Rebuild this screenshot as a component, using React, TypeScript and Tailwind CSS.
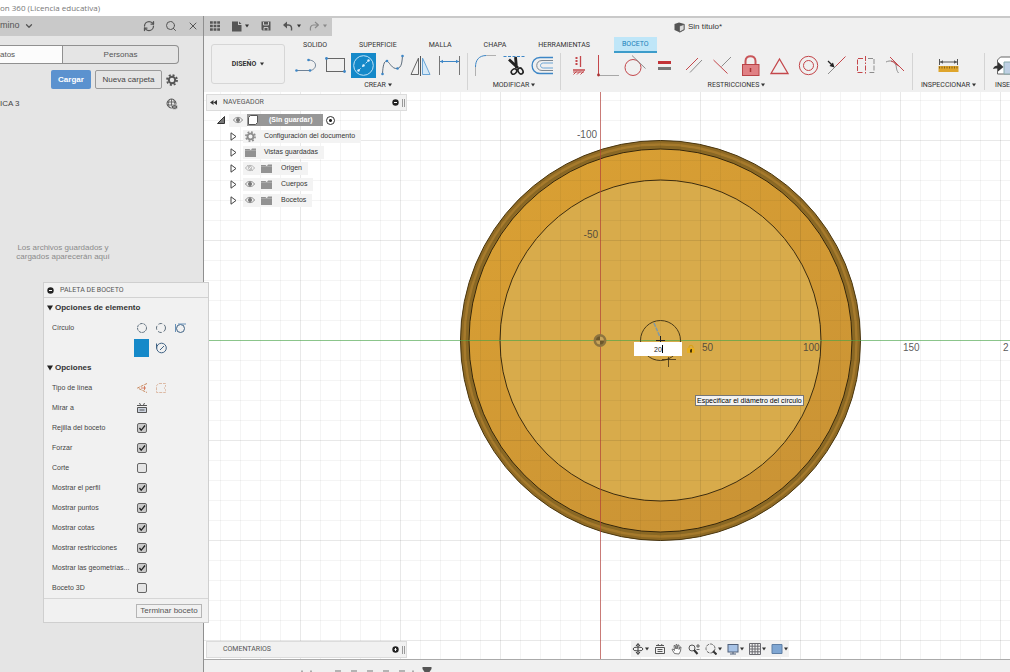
import React, { useState } from 'react';
import { ChevronDown, RefreshCw, Search, X } from 'lucide-react';

interface IconProps {
    children: React.ReactNode;
    className?: string;
    box?: string;
}

const Icon: React.FC<IconProps> = ({ children, className = 'w-[25px] h-[25px]', box = '0 0 25 25' }) => (
    <svg viewBox={box} className={`shrink-0 ${className}`} fill="none" stroke="#4a4a4a" strokeWidth="1" aria-hidden="true">
        {children}
    </svg>
);

const Caret: React.FC<{ className?: string }> = ({ className = 'text-[#333]' }) => (
    <svg viewBox="0 0 4 4" className={`w-1 h-1 shrink-0 ${className}`} fill="currentColor" aria-hidden="true">
        <path d="M0 0.5h4L2 3.5z" />
    </svg>
);

const Gear: React.FC<{ className?: string }> = ({ className = '' }) => (
    <svg viewBox="0 0 12 12" className={`shrink-0 ${className}`} fill="none" stroke="currentColor" aria-hidden="true">
        <circle cx="6" cy="6" r="3.2" strokeWidth="2" />
        <circle cx="6" cy="6" r="5" strokeWidth="1.800" strokeDasharray="2 1.927" />
    </svg>
);

const BLUE = '#3d86c6';
const RED = '#c4474b';
const GRAY = '#8d8d8d';

interface Tool {
    name: string;
    active?: boolean;
    art: React.ReactNode;
}

const createTools: Tool[] = [
    {
        name: 'Línea',
        art: (
            <>
                <path d="M2.500 17.500H16c7.500-1 7.500-10-1-10.500" stroke="#6f8296" />
                <g fill={BLUE} stroke="none"><circle cx="2.500" cy="17.500" r="1.300" /><circle cx="16" cy="17.500" r="1.300" /><circle cx="14.500" cy="7" r="1.300" /></g>
            </>
        ),
    },
    {
        name: 'Rectángulo',
        art: (
            <>
                <rect x="3.500" y="5.500" width="18" height="13" stroke="#666" />
                <g fill={BLUE} stroke="none"><circle cx="3.500" cy="5.500" r="1.400" /><circle cx="21.500" cy="18.500" r="1.400" /></g>
            </>
        ),
    },
    {
        name: 'Círculo',
        active: true,
        art: (
            <>
                <circle cx="12.500" cy="12.500" r="9.800" stroke="#bfe2f7" />
                <path d="M7.500 17.500l10-10" stroke="#bfe2f7" strokeDasharray="3 2" />
                <g fill="#e3f4ff" stroke="none"><circle cx="12.500" cy="12.500" r="1.200" /><circle cx="7.500" cy="17.500" r="1.200" /><circle cx="17.500" cy="7.500" r="1.200" /></g>
            </>
        ),
    },
    {
        name: 'Spline',
        art: (
            <>
                <path d="M2.500 21C3 10 5 7 7.500 8.500S12 16 17 15.500 22 8 22.500 3" stroke="#5d6d7d" />
                <g fill={BLUE} stroke="none"><circle cx="2.500" cy="21" r="1.300" /><circle cx="7" cy="8" r="1.300" /><circle cx="17.500" cy="15.500" r="1.300" /><circle cx="22.500" cy="3" r="1.300" /></g>
            </>
        ),
    },
    {
        name: 'Simetría',
        art: (
            <>
                <path d="M10.500 5v16.500H3z" stroke="#666" />
                <path d="M14.500 5v16.500H22z" stroke="#6aa5d6" fill="#d5e9f8" />
                <path d="M12.500 3v20" stroke="#555" />
            </>
        ),
    },
    {
        name: 'Cota',
        art: (
            <>
                <path d="M2.500 3v19M22.500 3v19" stroke="#777" />
                <path d="M3 8.500h19" stroke={BLUE} />
                <path d="M3 8.500l3-1.800v3.600zM22 8.500l-3-1.800v3.600z" fill={BLUE} stroke="none" />
            </>
        ),
    },
];

const modifyTools: Tool[] = [
    {
        name: 'Empalme',
        art: (
            <>
                <path d="M2.500 23V13" stroke="#b0b0b0" />
                <path d="M2.500 14C2.500 7 6 2.500 13.500 2.500" stroke={BLUE} />
                <path d="M13.500 2.500H23" stroke="#b0b0b0" />
            </>
        ),
    },
    {
        name: 'Recortar',
        art: (
            <>
                <path d="M1.500 3.500H24" stroke={BLUE} strokeDasharray="3 1.500" />
                <path d="M7 6.500l9 8.500M13.500 4l1 11" stroke="#222" strokeWidth="2.800" />
                <ellipse cx="12" cy="18.500" rx="3" ry="2.300" stroke="#222" strokeWidth="1.600" transform="rotate(-40 12 18.500)" />
                <ellipse cx="18.500" cy="18" rx="2.300" ry="3.200" stroke="#222" strokeWidth="1.600" transform="rotate(-30 18.500 18)" />
            </>
        ),
    },
    {
        name: 'Desfase',
        art: (
            <>
                <path d="M23 4.500H10c-10.500 0-10.500 16 0 16h13" stroke={BLUE} strokeWidth="1.300" />
                <path d="M23 7.500H12c-7 0-7 10 0 10h11" stroke="#7d8790" />
                <path d="M23 10h-9.500c-4 0-4 5 0 5H23" stroke="#6aa5d6" />
            </>
        ),
    },
];

const constraintTools: Tool[] = [
    {
        name: 'Horizontal/Vertical',
        art: (
            <>
                <path d="M14.500 3v11M7 17h12" stroke={RED} strokeWidth="1.300" />
                <path d="M10.500 4v9" stroke={RED} strokeWidth="2" strokeDasharray="2 1" />
                <path d="M7.500 21.500l3-3M11 21.500l3-3M14.500 21.500l3-3M7 19h11" stroke={RED} />
            </>
        ),
    },
    {
        name: 'Coincidente',
        art: (
            <>
                <path d="M3.500 2v20" stroke={RED} />
                <path d="M4 22.500h20" stroke="#a8a8a8" />
                <circle cx="3.500" cy="22" r="1.400" fill="#a33" stroke="none" />
            </>
        ),
    },
    {
        name: 'Tangente',
        art: (
            <>
                <circle cx="10" cy="14.500" r="8" stroke={RED} />
                <path d="M9 2.500l13.500 13" stroke={GRAY} />
            </>
        ),
    },
    {
        name: 'Igual',
        art: (
            <>
                <path d="M6 9.500h13" stroke="#c23237" strokeWidth="3" />
                <path d="M6 15.500h13" stroke="#777" strokeWidth="3" />
            </>
        ),
    },
    {
        name: 'Paralelo',
        art: (
            <>
                <path d="M5 17L17 5" stroke={RED} />
                <path d="M9 19.500l12-12.500" stroke={GRAY} />
            </>
        ),
    },
    {
        name: 'Perpendicular',
        art: (
            <>
                <path d="M3.500 7l14 13.500" stroke={RED} />
                <path d="M11.500 13.500L21 4" stroke={GRAY} />
            </>
        ),
    },
    {
        name: 'Fijar',
        art: (
            <>
                <path d="M7.500 12V8c0-6.500 10-6.500 10 0v4" stroke="#c9565a" strokeWidth="2" />
                <rect x="4.500" y="11.500" width="16.500" height="11" fill="#e08084" stroke="#b84448" />
                <path d="M12.500 15v4" stroke="#a33" strokeWidth="1.500" />
            </>
        ),
    },
    { name: 'Punto medio', art: <path d="M12.500 6l8.500 14.500H4z" stroke={RED} strokeWidth="1.300" /> },
    {
        name: 'Concéntrico',
        art: (
            <>
                <circle cx="12.500" cy="12.500" r="9.200" stroke={RED} />
                <circle cx="12.500" cy="12.500" r="5" stroke={RED} />
            </>
        ),
    },
    {
        name: 'Colineal',
        art: (
            <>
                <path d="M4 21l8-8" stroke={GRAY} />
                <path d="M12 13l9.500-9.500" stroke={RED} />
                <path d="M4 8l4 4" stroke="#222" strokeWidth="1.300" />
                <path d="M10.500 14.500l-5-1.500L9 9.500z" fill="#222" stroke="none" />
            </>
        ),
    },
    {
        name: 'Simetría',
        art: (
            <>
                <path d="M10 5.500H4.500v14H10" stroke={RED} strokeDasharray="5 1.500" />
                <path d="M15 5.500h6v14h-6" stroke={GRAY} strokeDasharray="5 1.500" />
                <path d="M12.500 3v19" stroke={RED} strokeDasharray="5 1.500 1.500 1.500" />
            </>
        ),
    },
    {
        name: 'Curvatura',
        art: (
            <>
                <path d="M8 4l14 14" stroke={RED} />
                <path d="M4 9c4-2 8-1 9.500 2s0 5 3 9" stroke={GRAY} />
                <path d="M9 8c4 1 5 4 8 5" stroke={RED} />
            </>
        ),
    },
];

const inspectTools: Tool[] = [
    {
        name: 'Medir',
        art: (
            <>
                <path d="M3.500 6v6M21.500 6v6M4 9h17" stroke="#555" />
                <path d="M4 9l3-1.700v3.400zM21 9l-3-1.700v3.400z" fill="#555" stroke="none" />
                <rect x="2.500" y="13" width="20" height="6" fill="#dfa52c" stroke="none" />
                <path d="M3 14.500h19" stroke="#8a6416" strokeWidth="2" strokeDasharray="1 1.500" />
            </>
        ),
    },
];

const ToolGroup: React.FC<{ label: string; tools: Tool[]; rowClassName: string; groupClassName?: string }> = ({ label, tools, rowClassName, groupClassName = '' }) => (
    <div className={`flex flex-col items-center shrink-0 px-[5px] border-r border-[#d4d4d4] ${groupClassName}`}>
        <div className={`flex ${rowClassName}`}>
            {tools.map((tool) => (
                <button key={tool.name} type="button" aria-label={tool.name} className={tool.active ? 'bg-[#1589c9]' : ''}>
                    <Icon>{tool.art}</Icon>
                </button>
            ))}
        </div>
        <button type="button" className="flex items-center gap-0.5 mt-0.5 text-[7px] leading-[10px] text-[#333]">
            {label}
            <Caret />
        </button>
    </div>
);

const tabs = ['SOLIDO', 'SUPERFICIE', 'MALLA', 'CHAPA', 'HERRAMIENTAS', 'BOCETO'];

const QuickAccess: React.FC = () => (
    <div className="flex h-5 shrink-0 bg-[#c9c9c9]">
        <div className="flex items-center w-32 shrink-0 pl-1.5 text-[#555]">
            <button type="button" aria-label="Panel de datos">
                <Icon className="w-[10px] h-[10px]" box="0 0 10 10">
                    <path d="M0 1.500h10M0 5h10M0 8.500h10" stroke="#555" strokeWidth="2.500" strokeDasharray="2.800 0.800" />
                </Icon>
            </button>
            <button type="button" aria-label="Archivo" className="flex items-center gap-[3px] ml-3">
                <Icon className="w-[10px] h-[11px]" box="0 0 10 11">
                    <path d="M0 0.500h6v3.500h3.500v6.500H0z" fill="#555" stroke="none" />
                    <path d="M7 0.500l2.500 2.500H7z" fill="#555" stroke="none" />
                </Icon>
                <Caret />
            </button>
            <button type="button" aria-label="Guardar" className="ml-3">
                <Icon className="w-[10px] h-[10px]" box="0 0 10 10">
                    <path d="M0.500 0.500h9v9h-8l-1-1z" fill="#555" stroke="none" />
                    <path d="M2.500 1v3h5V1M3 9.500V6.500h4v3" stroke="#c9c9c9" />
                </Icon>
            </button>
            <button type="button" aria-label="Deshacer" className="flex items-center gap-1 ml-3">
                <Icon className="w-[10px] h-[10px]" box="0 0 10 10">
                    <path d="M2 4h3.500c2.500 0 3.500 2 3 5.500" stroke="#555" strokeWidth="1.400" />
                    <path d="M4 0.500v7L0 4z" fill="#555" stroke="none" />
                </Icon>
                <Caret />
            </button>
            <button type="button" aria-label="Rehacer" className="flex items-center gap-1 ml-2">
                <Icon className="w-[10px] h-[10px]" box="0 0 10 10">
                    <path d="M9 4H4.500C2 4 1 6 1.500 9.500M6 1l3.500 3L6 7" stroke="#8a8a8a" strokeWidth="1.200" />
                </Icon>
                <Caret className="text-[#8a8a8a]" />
            </button>
        </div>
        <div className="flex flex-1 items-center justify-center gap-[3px] pl-[54px] mt-0.5 bg-[#f0f0f0]">
            <Icon className="w-[11px] h-[11px]" box="0 0 11 11">
                <path d="M0.500 2L5 0.500l5.500 1.500v6L6 10.500.5 8z" fill="#555" stroke="none" />
                <path d="M5.500 4l4.500-1.500v5L5.500 10z" fill="#ddd" stroke="#555" strokeWidth="0.700" />
            </Icon>
            <span className="text-[8px] leading-[10px] text-[#333]">Sin título*</span>
        </div>
    </div>
);

const Ribbon: React.FC = () => (
    <div className="flex h-14 shrink-0 overflow-hidden bg-[#f0f0f0] font-['Roboto',sans-serif]">
        <button type="button" className="flex items-center justify-center gap-1 w-[74px] h-10 mt-2 ml-[7px] shrink-0 rounded-[3px] border border-[#d6d6d6] text-[7px] font-bold text-[#333]">
            DISEÑO
            <Caret />
        </button>
        <div className="flex flex-col ml-1 pt-px">
            <div className="flex gap-4 pl-1.5">
                {tabs.map((tab) => (
                    <button
                        key={tab}
                        type="button"
                        className={
                            tab === 'BOCETO'
                                ? 'h-4 px-2 text-[7px] leading-[14px] text-[#1b7fb8] bg-[#bfe6f8] border-b-2 border-[#3d9cca]'
                                : 'h-4 px-2 text-[7px] leading-[14px] text-[#333]'
                        }
                    >
                        {tab}
                    </button>
                ))}
            </div>
            <div className="flex h-[37px]">
                <ToolGroup label="CREAR" tools={createTools} rowClassName="w-[168px] justify-between" />
                <ToolGroup label="MODIFICAR" tools={modifyTools} rowClassName="w-[82px] justify-between" />
                <ToolGroup label="RESTRICCIONES" tools={constraintTools} rowClassName="w-[341px] justify-between" />
                <ToolGroup label="INSPECCIONAR" tools={inspectTools} rowClassName="justify-center" groupClassName="w-[72px]" />
                <div className="flex flex-col shrink-0 pl-2">
                    <button type="button" aria-label="Insertar">
                        <Icon className="w-10 h-[25px]" box="0 0 40 25">
                            <path d="M4.500 7l3-3H24v17H4.500z" fill="#fff" stroke="#666" />
                            <path d="M11 9h13v12H11z" fill="#bfd0e4" stroke="#8aa" />
                            <path d="M0 16c1-3 2.500-3.500 5-3.500V9l5.500 5-5.500 4.500V15.500C3 15.500 1.500 15.500 0 16z" fill="#333" stroke="none" />
                        </Icon>
                    </button>
                    <button type="button" className="mt-0.5 pl-0.5 text-left text-[7px] leading-[10px] text-[#333]">INSE</button>
                </div>
            </div>
        </div>
    </div>
);

const DataPanel: React.FC = () => (
    <aside className="flex flex-col w-[204px] shrink-0 bg-[#e5e5e5] border-r border-[#8f8f8f]">
        <div className="flex items-center h-5 shrink-0 pr-1 bg-[#c9c9c9] text-[#555]">
            <button type="button" className="flex items-center gap-1 text-[9px]">
                mino
                <ChevronDown className="w-2.5 h-2.5" strokeWidth={3} />
            </button>
            <div className="flex items-center gap-2.5 ml-auto">
                <button type="button" aria-label="Actualizar"><RefreshCw className="w-3 h-3" strokeWidth={2.5} /></button>
                <button type="button" aria-label="Buscar"><Search className="w-3 h-3" /></button>
                <button type="button" aria-label="Cerrar"><X className="w-3 h-3" /></button>
            </div>
        </div>
        <div className="flex mt-[9px] mr-6 h-[19px] shrink-0 border border-l-0 border-[#909090] rounded-r-sm text-[8px] text-[#555]">
            <button type="button" className="w-[62px] bg-[#fcfcfc] text-left">atos</button>
            <button type="button" className="flex-1 border-l border-[#909090]">Personas</button>
        </div>
        <div className="flex items-center gap-1 mt-1.5 pl-[51px]">
            <button type="button" className="w-10 h-[19px] rounded-xs bg-[#5b92cf] text-[8px] font-bold text-white">Cargar</button>
            <button type="button" className="w-[67px] h-[19px] rounded-xs border border-[#9a9a9a] text-[8px] text-[#444] whitespace-nowrap">Nueva carpeta</button>
            <button type="button" aria-label="Configuración"><Gear className="w-3 h-3 text-[#555]" /></button>
        </div>
        <div className="flex items-center justify-between mt-[9px] pr-[25px] text-[8px] text-[#444]">
            <span>ICA 3</span>
            <Icon className="w-3 h-3" box="0 0 12 12">
                <circle cx="5.500" cy="5.500" r="4.500" stroke="#555" />
                <path d="M1 4h9M1 7h9M5.500 1v9M3.500 1.500c-1.500 3-1.500 5 0 8M7.500 1.500c1.500 3 1.500 5 0 8" stroke="#555" strokeWidth="0.800" />
                <ellipse cx="8.500" cy="9" rx="3.200" ry="2.300" fill="#555" stroke="#e5e5e5" strokeWidth="0.700" />
                <path d="M7.200 9h2.600" stroke="#e5e5e5" strokeWidth="0.800" />
            </Icon>
        </div>
        <p className="w-[126px] mt-[133px] text-center text-[8px] leading-[9px] text-[#8b8b8b]">
            Los archivos guardados y cargados aparecerán aquí
        </p>
    </aside>
);

const Eye: React.FC<{ off?: boolean }> = ({ off = false }) => (
    <Icon className="w-[10px] h-2" box="0 0 10 8">
        <path d="M0.500 4C2.500 0.500 7.500 0.500 9.500 4 7.500 7.500 2.500 7.500 0.500 4z" stroke={off ? '#b5b5b5' : '#8d8d8d'} />
        <circle cx="5" cy="4" r="1.700" fill={off ? 'none' : '#777'} stroke={off ? '#b5b5b5' : '#777'} strokeWidth="0.800" />
        {off && <path d="M2 1l6 6" stroke="#b5b5b5" strokeWidth="0.800" />}
    </Icon>
);

const Folder: React.FC = () => (
    <Icon className="w-[11px] h-[9px]" box="0 0 11 9">
        <path d="M0 1h4.500l1 1h.5l1-1.500h4V9H0z" fill="#929292" stroke="none" />
        <path d="M0 2.500h11" stroke="#b8b8b8" strokeWidth="0.600" />
    </Icon>
);

const PanelBar: React.FC<{ title: string; mark: 'minus' | 'plus'; collapsible?: boolean }> = ({ title, mark, collapsible = false }) => (
    <div className="flex items-center w-[201px] h-[17px] pl-[3px] pr-px border border-[#dcdcdc] bg-[#f1f1f1] text-[7px] leading-[9px] text-[#555]">
        <span className="w-[13px]">
            {collapsible && (
                <Icon className="w-[7px] h-[5px]" box="0 0 7 5">
                    <path d="M3.500 0v5L0 2.500zM7 0v5L3.500 2.500z" fill="#333" stroke="none" />
                </Icon>
            )}
        </span>
        <span className="font-['Roboto',sans-serif]">{title}</span>
        <button type="button" aria-label={`Mostrar u ocultar ${title}`} className="ml-auto">
            <Icon className="w-[7px] h-[7px]" box="0 0 7 7">
                <circle cx="3.500" cy="3.500" r="3.200" fill="#222" stroke="none" />
                <path d={mark === 'minus' ? 'M2 3.500h3' : 'M3.500 2v3M2.500 3.500h2'} stroke="#fff" />
            </Icon>
        </button>
        <span className="w-[3px] h-2 ml-[3px] border-x border-[#999]" />
    </div>
);

interface TreeNode {
    label: string;
    kind: 'settings' | 'folder' | 'visible' | 'hidden';
}

const treeNodes: TreeNode[] = [
    { label: 'Configuración del documento', kind: 'settings' },
    { label: 'Vistas guardadas', kind: 'folder' },
    { label: 'Origen', kind: 'hidden' },
    { label: 'Cuerpos', kind: 'visible' },
    { label: 'Bocetos', kind: 'visible' },
];

const Browser: React.FC = () => (
    <div className="absolute left-0.5 top-0.5 text-[7px] text-[#333]">
        <PanelBar title="NAVEGADOR" mark="minus" collapsible />
        <div className="flex items-center h-4 mt-px pl-[11px]">
            <Icon className="w-2 h-2" box="0 0 8 8">
                <path d="M7.500 0.500v7h-7z" fill="#777" stroke="#333" />
            </Icon>
            <span className="flex items-center h-[13px] ml-1 pl-1 pr-1 bg-[#f3f3f3]"><Eye /></span>
            <span className="flex items-center gap-[10px] h-3 w-[76px] bg-[#979797] font-bold text-white">
                <Icon className="w-3 h-3" box="0 0 12 12">
                    <path d="M1.500 3.500l2-2h7v7l-2 2h-7z" fill="#fff" stroke="#555" />
                </Icon>
                (Sin guardar)
            </span>
            <input type="radio" name="componente" aria-label="Activar componente" defaultChecked className="appearance-none w-[9px] h-[9px] ml-[3px] rounded-full border border-[#333] bg-white bg-[radial-gradient(#222_1px,transparent_2px)]" />
        </div>
        {treeNodes.map((node) => (
            <div key={node.label} className="flex items-center h-4 pl-6">
                <button type="button" aria-label={`Expandir ${node.label}`}>
                    <Icon className="w-[7px] h-[9px]" box="0 0 7 9">
                        <path d="M1 0.800v7.400l5-3.700z" fill="#fff" stroke="#444" />
                    </Icon>
                </button>
                <span className="flex items-center h-[13px] ml-1.5 pl-0.5 pr-1.5 bg-[#f3f3f3]">
                    {node.kind === 'settings' && <Gear className="w-[11px] h-[11px] mr-2 text-[#8d8d8d]" />}
                    {node.kind === 'folder' && <span className="mr-2"><Folder /></span>}
                    {(node.kind === 'visible' || node.kind === 'hidden') && (
                        <span className="flex items-center gap-1.5 mr-[9px]">
                            <Eye off={node.kind === 'hidden'} />
                            <Folder />
                        </span>
                    )}
                    {node.label}
                </span>
            </div>
        ))}
    </div>
);

const gridLines = (from: number, to: number) => {
    const lines: number[] = [];
    for (let v = from; v <= to; v += 20) lines.push(v);
    return lines;
};

// Everything here is in window coordinates, the model origin sits at 600, 340.
const Drawing: React.FC = () => (
    <svg className="absolute inset-0 w-full h-full" fill="none" aria-hidden="true">
        <defs>
            <linearGradient id="rim" x1="0" y1="0" x2="0.6" y2="1">
                <stop offset="0" stopColor="#dba133" />
                <stop offset="1" stopColor="#cb9435" />
            </linearGradient>
            <g id="grid">
                {gridLines(220, 3000).map((x) => (
                    <path key={`x${x}`} d={`M${x + 0.5} 92V2000`} stroke="#000" strokeOpacity={x % 100 === 0 ? 0.09 : 0.045} />
                ))}
                {gridLines(100, 2000).map((y) => (
                    <path key={`y${y}`} d={`M204 ${y + 0.5}H3000`} stroke="#000" strokeOpacity={y % 100 === 40 ? 0.09 : 0.045} />
                ))}
            </g>
        </defs>
        <g transform="translate(-204 -92)">
            <circle cx="660.500" cy="340.500" r="200" fill="#94702a" />
            <circle cx="660.500" cy="340.500" r="198" stroke="#8f6a24" strokeWidth="3" />
            <circle cx="660.500" cy="340.500" r="196" stroke="#a67a2c" strokeWidth="2.500" />
            <circle cx="660.500" cy="340.500" r="193.500" stroke="#8a6824" strokeWidth="2.500" />
            <circle cx="660.500" cy="340.500" r="200" stroke="#4a360f" />
            <circle cx="660.500" cy="340.500" r="191.500" fill="url(#rim)" stroke="#33250a" />
            <circle cx="660.500" cy="340.500" r="160.500" fill="#d8ab4b" stroke="#3d2d10" />
            <use href="#grid" />
            <path d="M600.500 92V2000" stroke="#b8403a" strokeOpacity="0.65" />
            <path d="M204 340.500H3000" stroke="#4cae4c" strokeOpacity="0.6" />
            <circle cx="600" cy="340.500" r="6.500" fill="#8d7440" />
            <circle cx="600" cy="340.500" r="4" fill="#6d582c" />
            <path d="M600 340.500v-4a4 4 0 0 1 4 4zM600 340.500v4a4 4 0 0 1-4-4z" fill="#c9a55a" />
            <circle cx="660.500" cy="340.500" r="20" stroke="#4a3a18" />
            <path d="M654 323l6 14" stroke="#8199a5" strokeWidth="1.500" strokeDasharray="4 1" />
            <path d="M660.500 336v9M656 340.500h9" stroke="#222" />
            <path d="M668.500 357v10M662 359.500h14" stroke="#3d3014" strokeOpacity="0.8" />
            <g fontFamily="Liberation Sans, sans-serif" fontSize="10" fill="#3a3a3a" fillOpacity="0.85">
                <text x="597" y="138" textAnchor="end">-100</text>
                <text x="598" y="238" textAnchor="end">-50</text>
                <text x="702" y="351">50</text>
                <text x="803" y="351">100</text>
                <text x="903" y="351">150</text>
                <text x="1003" y="351">2</text>
            </g>
        </g>
    </svg>
);

const ViewTools: React.FC = () => {
    const items: { name: string; menu?: boolean; art: React.ReactNode }[] = [
        {
            name: 'Órbita',
            menu: true,
            art: (
                <>
                    <ellipse cx="6" cy="6" rx="5" ry="2" stroke="#444" />
                    <path d="M6 1v10M4 3l2-2.500L8 3M4 9l2 2.500L8 9" stroke="#333" />
                </>
            ),
        },
        {
            name: 'Mirar a',
            art: (
                <>
                    <path d="M1.500 4.500h9v6h-9zM3.500 6.500h5M3.500 8.500h5M2 2.500h8" stroke="#555" />
                    <path d="M4 1l1 2M8 1L7 3" stroke="#555" />
                </>
            ),
        },
        {
            name: 'Encuadre',
            art: <path d="M3.500 10.500L1 6.500l1-.5 1.500 1.500L3 2.500h1L5 6V1.500h1V6l1-4h1v4.500l1-2.500h1L9.500 8 8 11z" fill="#fff" stroke="#555" strokeWidth="0.800" />,
        },
        {
            name: 'Zoom',
            art: (
                <>
                    <circle cx="4" cy="5" r="3" stroke="#555" />
                    <path d="M6 7l3.500 4" stroke="#333" strokeWidth="2" />
                    <path d="M8 3h4M10 1v4M8.500 6.500h3" stroke="#444" strokeWidth="0.800" />
                </>
            ),
        },
        {
            name: 'Ajustar',
            menu: true,
            art: (
                <>
                    <circle cx="5.500" cy="5.500" r="4.500" stroke="#666" strokeDasharray="3 1" />
                    <path d="M8 8l3.500 3.500" stroke="#333" strokeWidth="2" />
                </>
            ),
        },
        {
            name: 'Configuración de visualización',
            menu: true,
            art: (
                <>
                    <rect x="1" y="1.500" width="10" height="7.500" fill="#a8c3e6" stroke="#51617a" />
                    <path d="M6 9v2M3 11h6" stroke="#51617a" />
                </>
            ),
        },
        {
            name: 'Rejilla',
            menu: true,
            art: <path d="M0.500 0.500h11v11H.5zM3.200 1v10M6 1v10M8.800 1v10M1 3.200h10M1 6h10M1 8.800h10" stroke="#6a6a70" />,
        },
        {
            name: 'Ventanas gráficas',
            menu: true,
            art: <path d="M1 1.500h10v9H1z" fill="#7fa6d2" stroke="#5f7fa5" />,
        },
    ];
    return (
        <div className="absolute left-[427px] bottom-0.5 flex items-center gap-[5px] h-4 px-px bg-[#f1f1f1]">
            {items.map((item) => (
                <button key={item.name} type="button" aria-label={item.name} className="flex items-center gap-px">
                    <Icon className="w-3 h-3" box="0 0 12 12">{item.art}</Icon>
                    {item.menu && <Caret />}
                </button>
            ))}
        </div>
    );
};

const Canvas: React.FC = () => {
    const [diameter, setDiameter] = useState('20');

    return (
        <main className="relative flex-1 overflow-hidden bg-white">
            <Drawing />
            <Browser />
            <div className="absolute left-[430px] top-[250px] flex items-center gap-1">
                <div className="relative">
                    <input
                        type="text"
                        aria-label="Diámetro del círculo"
                        value={diameter}
                        onChange={(e) => setDiameter(e.target.value)}
                        className="block w-12 h-3.5 bg-white text-center text-[7px] text-[#222] outline-none"
                    />
                    <span className="absolute left-7 top-[3px] w-px h-2 bg-black" />
                </div>
                <Icon className="w-2.5 h-2.5" box="0 0 10 10">
                    <path d="M3 5V3.500c0-3 4-3 4 0V5" stroke="#d8a11c" strokeWidth="1.200" />
                    <rect x="1" y="4" width="7.500" height="5" fill="#e8ae1c" stroke="none" />
                    <path d="M4.500 5.500v3M5.500 5v3.500" stroke="#4a3505" />
                </Icon>
            </div>
            <div role="tooltip" className="absolute left-[491px] top-[303px] px-px border border-[#777] bg-[#f3f3f3] text-[7px] leading-[9px] text-black whitespace-nowrap">
                Especificar el diámetro del círculo
            </div>
            <div className="absolute left-0.5 bottom-px">
                <PanelBar title="COMENTARIOS" mark="plus" />
            </div>
            <ViewTools />
        </main>
    );
};

const SectionTitle: React.FC<{ children: React.ReactNode }> = ({ children }) => (
    <h2 className="flex items-center gap-0.5 h-5 pl-[3px] text-[8px] font-bold text-[#333]">
        <Icon className="w-[6px] h-[6px]" box="0 0 6 6">
            <path d="M0 0.500h6L3 5.500z" fill="#222" stroke="none" />
        </Icon>
        {children}
    </h2>
);

const options = [
    { label: 'Rejilla del boceto', on: true },
    { label: 'Forzar', on: true },
    { label: 'Corte', on: false },
    { label: 'Mostrar el perfil', on: true },
    { label: 'Mostrar puntos', on: true },
    { label: 'Mostrar cotas', on: true },
    { label: 'Mostrar restricciones', on: true },
    { label: 'Mostrar las geometrías...', on: true },
    { label: 'Boceto 3D', on: false },
];

const SketchPalette: React.FC = () => {
    const [checked, setChecked] = useState(options.map((o) => o.on));
    const toggle = (index: number) => setChecked(checked.map((value, i) => (i === index ? !value : value)));

    return (
        <section className="absolute left-[43px] top-[282px] w-[166px] border border-[#cfcfcf] bg-[#f1f1f1] text-[7px] text-[#444]">
            <header className="flex items-center gap-1.5 h-[15px] pl-[3px] border-b border-[#d2d2d2] text-[#555] font-['Roboto',sans-serif]">
                <Icon className="w-[7px] h-[7px]" box="0 0 7 7">
                    <circle cx="3.500" cy="3.500" r="3.200" fill="#222" stroke="none" />
                    <path d="M2 3.500h3" stroke="#fff" />
                </Icon>
                PALETA DE BOCETO
            </header>
            <SectionTitle>Opciones de elemento</SectionTitle>
            <div className="grid grid-cols-[84px_1fr] pl-2">
                <span className="h-5 leading-5">Círculo</span>
                <div className="grid grid-cols-[19px_19px_19px]">
                    <button type="button" aria-label="Centro y diámetro" className="flex items-center h-5">
                        <Icon className="w-3 h-3" box="0 0 12 12"><circle cx="6" cy="6" r="4.500" stroke="#60707e" strokeDasharray="3 0.700" /></Icon>
                    </button>
                    <button type="button" aria-label="2 puntos" className="flex items-center h-5">
                        <Icon className="w-3 h-3" box="0 0 12 12"><circle cx="6" cy="6" r="4.500" stroke="#60707e" strokeDasharray="4 2" /></Icon>
                    </button>
                    <button type="button" aria-label="2 tangentes" className="flex items-center h-5">
                        <Icon className="w-3 h-3" box="0 0 12 12">
                            <circle cx="6.500" cy="6.500" r="4" stroke="#3f6284" />
                            <path d="M1.500 2v8M4 2h8" stroke="#6a92b8" />
                        </Icon>
                    </button>
                    <button type="button" aria-label="3 puntos" className="flex items-center h-5">
                        <span className="w-[15px] h-[18px] -ml-0.5 bg-[#1589c9]" />
                    </button>
                    <button type="button" aria-label="3 tangentes" className="flex items-center h-5">
                        <Icon className="w-3 h-3" box="0 0 12 12">
                            <circle cx="6.500" cy="6" r="4.800" stroke="#3f6284" />
                            <path d="M1.500 1.500v5M5 8l4-4" stroke="#3f6284" />
                        </Icon>
                    </button>
                </div>
            </div>
            <SectionTitle>Opciones</SectionTitle>
            <div className="flex items-center h-5 pl-2">
                <span className="w-[84px]">Tipo de línea</span>
                <button type="button" aria-label="Construcción" className="w-[19px]">
                    <Icon className="w-3 h-3" box="0 0 12 12"><path d="M11 1.500L1.500 6 11 10.500" stroke="#c98a5f" strokeDasharray="3 1" /><path d="M5 6h5M8.500 4v4" stroke="#d06a4a" strokeWidth="0.800" /></Icon>
                </button>
                <button type="button" aria-label="Línea de eje">
                    <Icon className="w-3 h-3" box="0 0 12 12"><path d="M4 1.500h6.500v3L9 6l1.500 1.500v3h-9v-7z" stroke="#dcb9a4" strokeDasharray="3 1" /></Icon>
                </button>
            </div>
            <div className="flex items-center h-5 pl-2">
                <span className="w-[84px]">Mirar a</span>
                <button type="button" aria-label="Mirar a">
                    <Icon className="w-3 h-3" box="0 0 12 12">
                        <path d="M1.500 5.500h9v5h-9z" fill="#ccd3df" stroke="#555" />
                        <path d="M1 3.500h10M3.500 1l1 2M8.500 1l-1 2M3.500 8h5" stroke="#555" />
                    </Icon>
                </button>
            </div>
            {options.map((option, index) => (
                <label key={option.label} className="flex items-center h-5 pl-2">
                    <span className="w-[85px] whitespace-nowrap">{option.label}</span>
                    <span className="relative">
                        <input
                            type="checkbox"
                            checked={checked[index]}
                            onChange={() => toggle(index)}
                            className="block appearance-none w-2.5 h-2.5 rounded-xs border border-[#666] bg-[#e4e4e4] checked:bg-[#c9c9c9]"
                        />
                        {checked[index] && (
                            <svg viewBox="0 0 10 10" className="absolute inset-0 w-2.5 h-2.5 pointer-events-none" fill="none" aria-hidden="true">
                                <path d="M2.500 5l1.700 2.300L8 2.500" stroke="#222" strokeWidth="1.300" />
                            </svg>
                        )}
                    </span>
                </label>
            ))}
            <footer className="flex items-center justify-end h-6 pr-1.5 border-t border-[#d6d6d6]">
                <button type="button" className="w-[66px] h-[14px] border border-[#b5b5b5] text-[8px] leading-3 text-[#555] whitespace-nowrap">Terminar boceto</button>
            </footer>
        </section>
    );
};

const Timeline: React.FC = () => (
    <footer className="h-[13px] shrink-0 overflow-hidden border-t border-[#aaa] bg-[#f0f0f0]">
        <Icon className="w-[140px] h-3 ml-24" box="0 0 140 12">
            <path d="M2 12v-1.500M11 12v-1.500M113 12v-1.500" stroke="#666" />
            <path d="M35 11h6M51 11h6M67 11h6M83 11h6M99 11h6" stroke="#777" />
            <path d="M122.500 7h9v2l-2 3h-5l-2-3z" fill="#555" stroke="none" />
        </Icon>
    </footer>
);

export default function App() {
    return (
        <div className="relative flex flex-col h-screen overflow-hidden bg-white font-['Liberation_Sans',Arial,sans-serif]">
            <header className="flex items-center h-4 shrink-0 text-[8px] text-[#777] font-['Open_Sans',sans-serif]">
                on 360 (Licencia educativa)
            </header>
            <div className="flex flex-1 min-h-0">
                <DataPanel />
                <div className="flex flex-col flex-1 min-w-0">
                    <QuickAccess />
                    <Ribbon />
                    <Canvas />
                    <Timeline />
                </div>
            </div>
            <SketchPalette />
        </div>
    );
}
